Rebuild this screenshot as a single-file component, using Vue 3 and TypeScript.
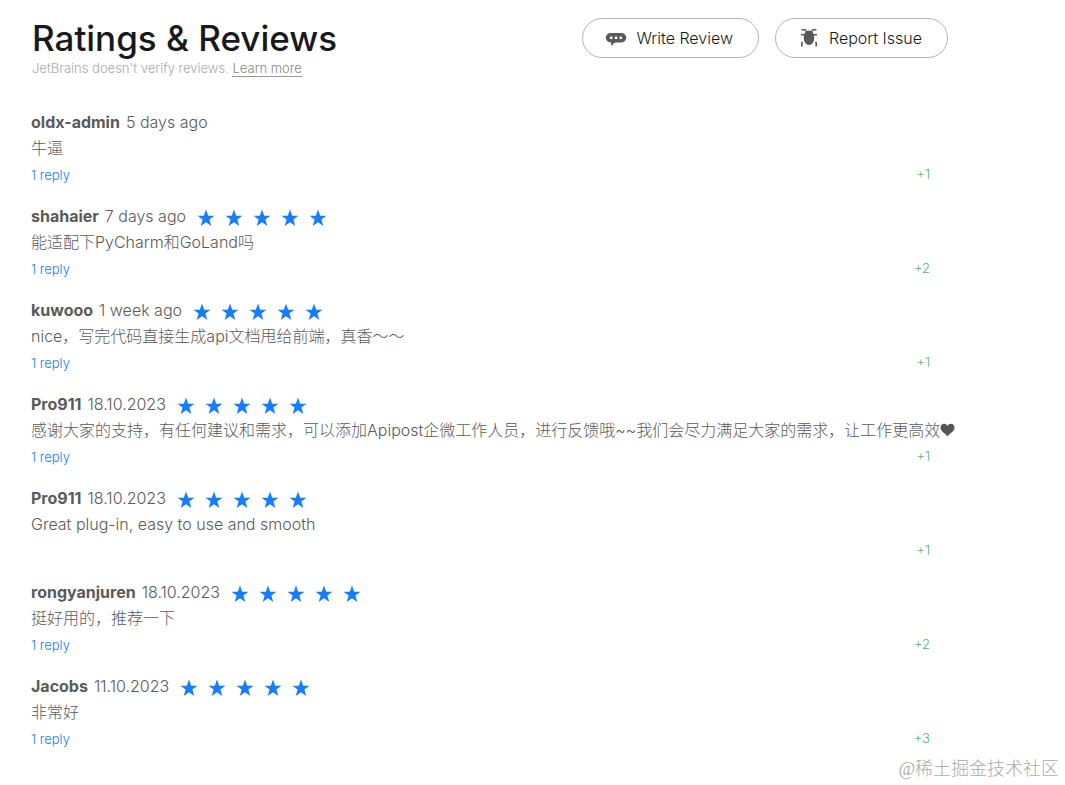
<script setup lang="ts">
interface Review {
  author: string
  date: string
  stars: number
  text: string
  heart?: boolean
  replies: number
  votes: number
}

const reviews: Review[] = [
  { author: 'oldx-admin', date: '5 days ago', stars: 0, text: '牛逼', replies: 1, votes: 1 },
  { author: 'shahaier', date: '7 days ago', stars: 5, text: '能适配下PyCharm和GoLand吗', replies: 1, votes: 2 },
  { author: 'kuwooo', date: '1 week ago', stars: 5, text: 'nice，写完代码直接生成api文档甩给前端，真香～～', replies: 1, votes: 1 },
  { author: 'Pro911', date: '18.10.2023', stars: 5, text: '感谢大家的支持，有任何建议和需求，可以添加Apipost企微工作人员，进行反馈哦~~我们会尽力满足大家的需求，让工作更高效', heart: true, replies: 1, votes: 1 },
  { author: 'Pro911', date: '18.10.2023', stars: 5, text: 'Great plug-in, easy to use and smooth', replies: 0, votes: 1 },
  { author: 'rongyanjuren', date: '18.10.2023', stars: 5, text: '挺好用的，推荐一下', replies: 1, votes: 2 },
  { author: 'Jacobs', date: '11.10.2023', stars: 5, text: '非常好', replies: 1, votes: 3 },
]
</script>

<template>
  <main class="page">
    <header class="header">
      <div class="heading">
        <h1>Ratings &amp; Reviews</h1>
        <p class="note">JetBrains doesn't verify reviews. <a href="#learn-more">Learn more</a></p>
      </div>
      <div class="actions">
        <button type="button" class="pill">
          <svg class="icon" viewBox="0 0 24 24" aria-hidden="true">
            <path fill-rule="evenodd" d="M6.500 7h11a4.750 4.750 0 0 1 0 9.500H11L7.200 20V16.500H6.500a4.750 4.750 0 0 1 0-9.500ZM7.200 10.400a1.400 1.400 0 1 0 0 2.800 1.400 1.400 0 0 0 0-2.800ZM12 10.400a1.400 1.400 0 1 0 0 2.800 1.400 1.400 0 0 0 0-2.800ZM16.800 10.400a1.400 1.400 0 1 0 0 2.800 1.400 1.400 0 0 0 0-2.800Z" />
          </svg>
          Write Review
        </button>
        <button type="button" class="pill">
          <svg class="icon" viewBox="0 0 24 24" aria-hidden="true">
            <path d="M12 4.500C15.500 4.500 17.200 7.500 17.200 12 17.200 16 15 19 12 19S6.800 16 6.800 12C6.800 7.500 8.500 4.500 12 4.500Z" />
            <path class="legs" d="M4.500 3.700H8L9.500 5.500M19.500 3.700H16L14.500 5.500M4 8.700H20M4.800 20.500V17L5.500 16M19.200 20.500V17L18.500 16" />
          </svg>
          Report Issue
        </button>
      </div>
    </header>

    <section class="reviews" aria-label="Reviews">
      <article v-for="(review, i) in reviews" :key="i" class="review">
        <div class="meta">
          <strong class="author">{{ review.author }}</strong>
          <span class="date">{{ review.date }}</span>
          <span v-if="review.stars" class="stars" role="img" :aria-label="`${review.stars} stars`">
            <svg v-for="n in review.stars" :key="n" viewBox="0 0 18 18">
              <path d="M9 .5 11.200 6.700H17.500L12.400 10.600 14.300 17 9 13.200 3.700 17 5.600 10.600.5 6.700H6.800Z" />
            </svg>
          </span>
        </div>
        <p class="text">{{ review.text }}<svg v-if="review.heart" class="heart" viewBox="0 0 15 14" aria-hidden="true"><path d="M7.500 13.500C6 11 .5 8.500.5 4.500.5 0 6-.5 7.500 3 9-.5 14.500 0 14.500 4.500 14.500 8.500 9 11 7.500 13.500Z" /></svg></p>
        <div class="footer">
          <a v-if="review.replies" href="#reply">{{ review.replies }} reply</a>
          <span class="votes">+{{ review.votes }}</span>
        </div>
      </article>
    </section>
    <div class="watermark">@稀土掘金技术社区</div>
  </main>
</template>

<style>
body {
  margin: 0;
  background: #fff;
}
</style>

<style scoped>
.page {
  position: relative;
  box-sizing: border-box;
  min-height: 100vh;
  padding: 18px 106px 21px 31px;
  font-family: Inter, "Noto Sans CJK SC", sans-serif;
  font-size: 16px;
  font-weight: 300;
  color: #5a5a5a;
}

.header {
  display: flex;
  justify-content: space-between;
  align-items: flex-start;
  padding-right: 11px;
  margin-bottom: 30px;
}

.heading {
  padding-left: 1px;
}

h1 {
  margin: 0;
  font-size: 35px;
  line-height: 40px;
  font-weight: 500;
  color: #19191c;
}

.note {
  margin: 0;
  font-size: 13px;
  line-height: 21px;
  color: #aaa;
}

.note a {
  color: #888;
  text-decoration: none;
  border-bottom: 1px solid #999;
}

.actions {
  display: flex;
  gap: 16px;
}

.pill {
  display: flex;
  align-items: center;
  gap: 8px;
  height: 40px;
  padding: 0 25px 0 21px;
  border: 1px solid #b3b3b3;
  border-radius: 20px;
  background: #fff;
  font: inherit;
  color: #19191c;
}

.icon {
  width: 24px;
  height: 24px;
  fill: #5a5a5a;
}

.legs {
  fill: none;
  stroke: #5a5a5a;
  stroke-width: 1.6;
}

.reviews {
  display: flex;
  flex-direction: column;
  gap: 16px;
}

.meta {
  display: flex;
  align-items: center;
  height: 26px;
}

.author {
  margin-right: 6px;
  font-weight: 700;
}

.stars {
  display: flex;
  gap: 10px;
  margin-left: 11px;
  padding-top: 3px;
}

.stars svg {
  width: 18px;
  height: 18px;
  fill: #167dff;
}

.text {
  margin: 0;
  line-height: 26px;
  white-space: nowrap;
}

.heart {
  width: 15px;
  height: 14px;
  vertical-align: -1px;
  fill: #555;
}

.footer {
  display: flex;
  align-items: center;
  height: 26px;
  padding-right: 29px;
  font-size: 13px;
}

.footer a {
  padding-top: 2px;
  color: #167dff;
  text-decoration: none;
}

.votes {
  margin-left: auto;
  color: #4dbb5f;
}

.watermark {
  position: absolute;
  right: 6px;
  bottom: 4px;
  font-family: "Liberation Serif", "Noto Sans CJK SC", serif;
  font-size: 18px;
  line-height: 24px;
  color: #aaa;
}
</style>
